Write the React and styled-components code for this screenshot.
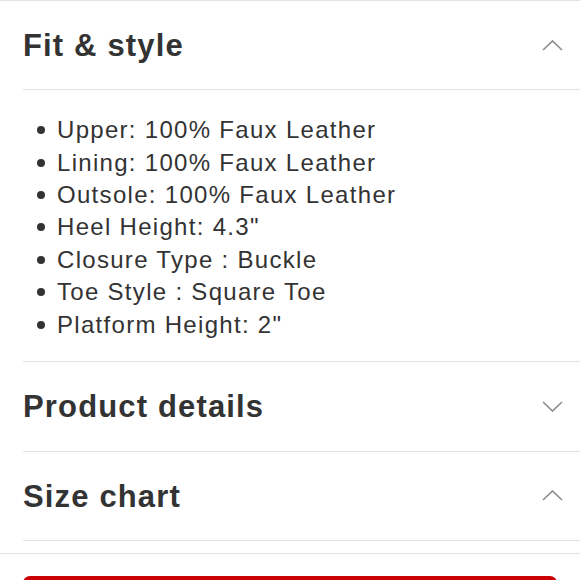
import React from "react";
import styled, { createGlobalStyle } from "styled-components";

const Global = createGlobalStyle`
  html, body { margin: 0; padding: 0; background: #fff; }
  body { font-family: "Liberation Sans", Arial, Helvetica, sans-serif; color: #333; overflow: hidden; }
`;

const Page = styled.div`
  width: 580px;
  height: 580px;
  overflow: hidden;
  border-top: 1px solid #e4e4e4;
  box-sizing: border-box;
`;

const Accordion = styled.div`
  margin-left: 23px;
`;

const Header = styled.div`
  height: ${(p) => p.$h || 88}px;
  display: flex;
  align-items: center;
  justify-content: space-between;
  padding-right: 17px;
  border-bottom: 1px solid #e4e4e4;
`;

const Title = styled.h2`
  margin: 0;
  padding-top: 2px;
  font-size: 31px;
  font-weight: 700;
  color: #333;
  letter-spacing: 1.15px;
`;

const List = styled.ul`
  list-style: none;
  margin: 0;
  padding: 24px 0 20px;
  border-bottom: 1px solid #e4e4e4;
`;

const Item = styled.li`
  display: flex;
  align-items: center;
  height: 32.4px;
  font-size: 24px;
  letter-spacing: 1.3px;
  color: #333;
`;

const Bullet = styled.span`
  width: 8px;
  height: 8px;
  border-radius: 50%;
  background: #333;
  margin-left: 14px;
  margin-right: 12px;
  flex: none;
`;

const Footer = styled.div`
  margin-top: 12px;
  border-top: 1px solid #e4e4e4;
  padding: 22px 23px 0;
`;

const Button = styled.div`
  height: 50px;
  background: #cc0000;
  border-radius: 7px;
`;

const Chevron = ({ up }) => (
  <svg width="21" height="11" viewBox="0 0 21 11" fill="none">
    <path
      d={up ? "M1 10 L10.5 1 L20 10" : "M1 1 L10.5 10 L20 1"}
      stroke="#8a8a8a"
      strokeWidth="1.6"
    />
  </svg>
);

const items = [
  "Upper: 100% Faux Leather",
  "Lining: 100% Faux Leather",
  "Outsole: 100% Faux Leather",
  'Heel Height: 4.3"',
  "Closure Type : Buckle",
  "Toe Style : Square Toe",
  'Platform Height: 2"',
];

export default function App() {
  return (
    <>
      <Global />
      <Page>
        <Accordion>
          <Header>
            <Title>Fit &amp; style</Title>
            <Chevron up />
          </Header>
          <List>
            {items.map((t) => (
              <Item key={t}>
                <Bullet />
                {t}
              </Item>
            ))}
          </List>
          <Header $h={89}>
            <Title>Product details</Title>
            <Chevron />
          </Header>
          <Header>
            <Title>Size chart</Title>
            <Chevron up />
          </Header>
        </Accordion>
        <Footer>
          <Button />
        </Footer>
      </Page>
    </>
  );
}
